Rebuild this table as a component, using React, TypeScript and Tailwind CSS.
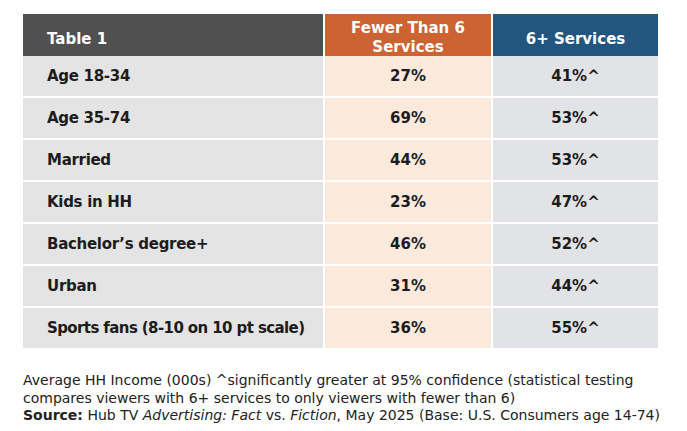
const rows = [
  { label: "Age 18-34", few: "27%", many: "41%^" },
  { label: "Age 35-74", few: "69%", many: "53%^" },
  { label: "Married", few: "44%", many: "53%^" },
  { label: "Kids in HH", few: "23%", many: "47%^" },
  { label: "Bachelor’s degree+", few: "46%", many: "52%^" },
  { label: "Urban", few: "31%", many: "44%^" },
  { label: "Sports fans (8-10 on 10 pt scale)", few: "36%", many: "55%^", tight: true },
];

function App() {
  return (
    <div className="w-[687px] h-[431px] bg-white pt-[14px] pl-[23px] font-['DejaVu_Sans',sans-serif] text-[#1c1c1c]">
      <div className="grid grid-cols-[300px_166px_165px] auto-rows-[40px] gap-[2px] w-fit">
        <div className="h-[48px] bg-[#505050] text-white font-bold text-[15px] flex items-center pl-6 pt-[2px]">
          Table 1
        </div>
        <div className="h-[48px] bg-[#cd6332] text-white font-bold text-[15px] leading-[19px] flex items-center justify-center text-center">
          Fewer Than 6
          <br />
          Services
        </div>
        <div className="h-[48px] bg-[#23567e] text-white font-bold text-[15px] flex items-center justify-center pt-[2px]">
          6+ Services
        </div>
        {rows.map((row) => (
          <>
            <div
              key={row.label}
              className={
                row.tight
                  ? "bg-[#e4e4e4] font-bold text-[15px] flex items-center pl-6 whitespace-nowrap tracking-[-0.6px]"
                  : "bg-[#e4e4e4] font-bold text-[15px] flex items-center pl-6 whitespace-nowrap tracking-[-0.3px]"
              }
            >
              {row.label}
            </div>
            <div className="bg-[#fbe9dc] font-bold text-[15px] flex items-center justify-center">
              {row.few}
            </div>
            <div className="bg-[#e2e3e7] font-bold text-[15px] flex items-center justify-center">
              {row.many}
            </div>
          </>
        ))}
      </div>
      <div className="mt-[24px] text-[14px] leading-[17.5px] whitespace-nowrap text-[#222]">
        <p>
          Average HH Income (000s) ^significantly greater at 95% confidence (statistical testing
          <br />
          compares viewers with 6+ services to only viewers with fewer than 6)
        </p>
        <p>
          <span className="font-bold">Source:</span> Hub TV <i>Advertising: Fact</i> vs. <i>Fiction</i>, May 2025 (Base: U.S. Consumers age 14-74)
        </p>
      </div>
    </div>
  );
}

export default App;
